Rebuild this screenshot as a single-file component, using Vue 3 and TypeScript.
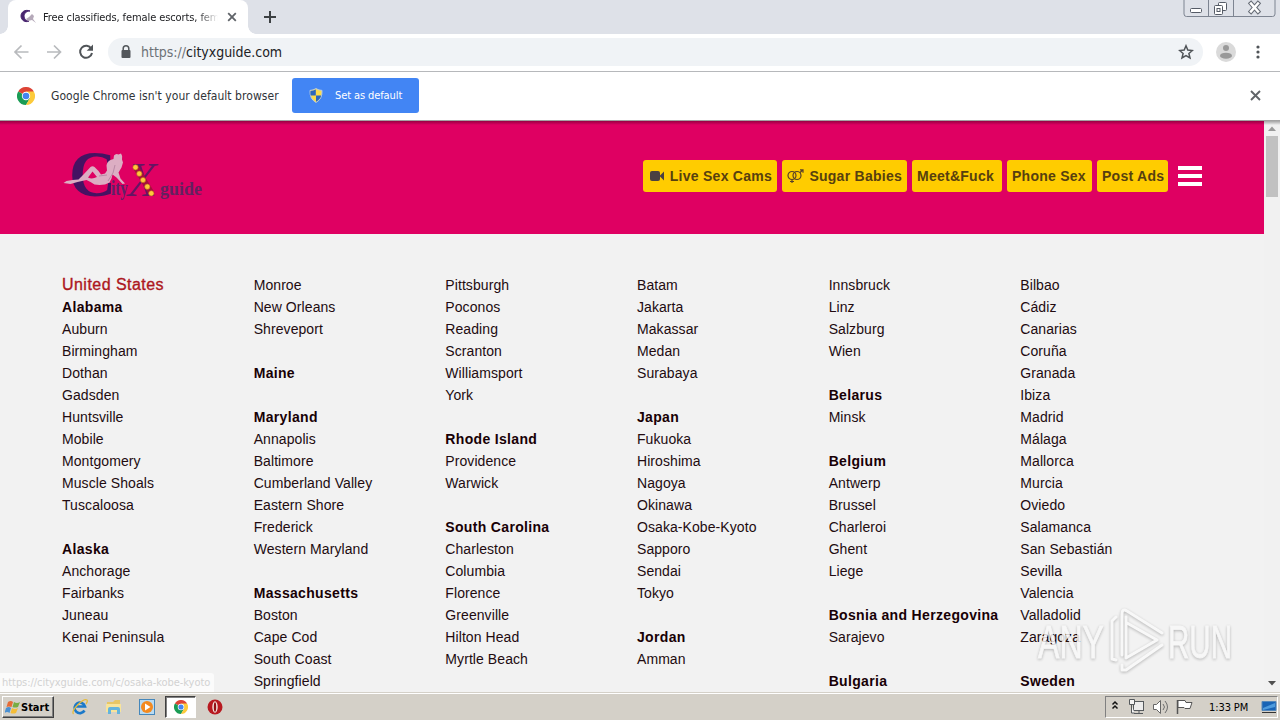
<script setup lang="ts">
const nav: { label: string; width: number; icon?: 'cam' | 'gender' }[] = [
  { label: 'Live Sex Cams', width: 134, icon: 'cam' },
  { label: 'Sugar Babies', width: 125, icon: 'gender' },
  { label: 'Meet&Fuck', width: 90 },
  { label: 'Phone Sex', width: 85 },
  { label: 'Post Ads', width: 71 },
]

// '*' marks a state or country heading, '#' a top level section, '' a blank row
const columns: string[][] = [
  ['#United States', '*Alabama', 'Auburn', 'Birmingham', 'Dothan', 'Gadsden', 'Huntsville', 'Mobile', 'Montgomery', 'Muscle Shoals', 'Tuscaloosa', '', '*Alaska', 'Anchorage', 'Fairbanks', 'Juneau', 'Kenai Peninsula'],
  ['Monroe', 'New Orleans', 'Shreveport', '', '*Maine', '', '*Maryland', 'Annapolis', 'Baltimore', 'Cumberland Valley', 'Eastern Shore', 'Frederick', 'Western Maryland', '', '*Massachusetts', 'Boston', 'Cape Cod', 'South Coast', 'Springfield'],
  ['Pittsburgh', 'Poconos', 'Reading', 'Scranton', 'Williamsport', 'York', '', '*Rhode Island', 'Providence', 'Warwick', '', '*South Carolina', 'Charleston', 'Columbia', 'Florence', 'Greenville', 'Hilton Head', 'Myrtle Beach'],
  ['Batam', 'Jakarta', 'Makassar', 'Medan', 'Surabaya', '', '*Japan', 'Fukuoka', 'Hiroshima', 'Nagoya', 'Okinawa', 'Osaka-Kobe-Kyoto', 'Sapporo', 'Sendai', 'Tokyo', '', '*Jordan', 'Amman'],
  ['Innsbruck', 'Linz', 'Salzburg', 'Wien', '', '*Belarus', 'Minsk', '', '*Belgium', 'Antwerp', 'Brussel', 'Charleroi', 'Ghent', 'Liege', '', '*Bosnia and Herzegovina', 'Sarajevo', '', '*Bulgaria'],
  ['Bilbao', 'Cádiz', 'Canarias', 'Coruña', 'Granada', 'Ibiza', 'Madrid', 'Málaga', 'Mallorca', 'Murcia', 'Oviedo', 'Salamanca', 'San Sebastián', 'Sevilla', 'Valencia', 'Valladolid', 'Zaragoza', '', '*Sweden'],
]
const kind = (s: string) => (s[0] === '#' ? 'section' : s[0] === '*' ? 'heading' : 'city')
const text = (s: string) => s.replace(/^[#*]/, '')
</script>

<template>
  <div class="screen">
    <div class="tabstrip">
      <div class="tab">
        <svg class="favicon" width="18" height="16" viewBox="0 0 18 16">
          <path d="M10 2C5 0 1 3 1 7s4 7 8 5C6 12 4 10 4 7s3-5 6-5z" fill="#48246f" stroke="#48246f" />
          <path d="M6 10l3-2 3-3 2 2-1 3 3 4-4-3-4 1z" fill="#b5a9b9" />
        </svg>
        <span class="tab-title">Free classifieds, female escorts, fem</span>
        <svg class="tab-close" width="10" height="10" viewBox="0 0 10 10"><path d="M1.200 1.200l7.600 7.600M8.800 1.200L1.200 8.800" stroke="#5f6368" stroke-width="1.800" /></svg>
      </div>
      <svg class="plus" width="12" height="12" viewBox="0 0 12 12"><path d="M6 0v12M0 6h12" stroke="#3c4043" stroke-width="2" /></svg>
      <svg class="window-buttons" width="94" height="18" viewBox="0 0 94 18" fill="none">
        <path d="M1 0v14q0 2.500 2.500 2.500h86q2.500 0 2.500-2.500V0M25.500 0v16M50.500 0v16" stroke="#7d8491" />
        <rect x="7.500" y="8.500" width="11" height="4" rx="1" fill="#fff" stroke="#555b66" />
        <rect x="35.500" y="2.500" width="8" height="8" rx="1" fill="#fff" stroke="#555b66" />
        <rect x="31.500" y="5.500" width="8" height="9" rx="1" fill="#fff" stroke="#555b66" /><rect x="34" y="8.500" width="3" height="3" stroke="#555b66" />
        <path d="M68 3.500l7 8M75 3.500l-7 8" stroke="#656b75" stroke-width="4.500" stroke-linecap="square" /><path d="M68 3.500l7 8M75 3.500l-7 8" stroke="#fff" stroke-width="2.500" stroke-linecap="square" />
      </svg>
    </div>

    <div class="toolbar">
      <svg class="tool-icons" width="96" height="24" viewBox="0 0 96 24" fill="none">
        <path d="M28.500 12h-13M21.500 5.500L15 12l6.500 6.500M47 12h13M54 5.500l6.500 6.500-6.500 6.500" stroke="#b8babd" stroke-width="1.700" />
        <path d="M91.300 8.700A6 6 0 1 0 92 13" stroke="#505458" stroke-width="2" /><path d="M93 4.500v6.300h-6.300z" fill="#505458" />
      </svg>
      <div class="omnibox">
        <svg width="10" height="14" viewBox="0 0 10 14"><rect x=".5" y="5" width="9" height="8" rx="1" fill="#53575b" /><path d="M2.200 6V3.600a2.800 2.800 0 0 1 5.600 0V6" fill="none" stroke="#53575b" stroke-width="1.500" /></svg>
        <span class="url"><i>https://</i>cityxguide.com</span>
        <svg class="star" width="16" height="16" viewBox="0 0 16 16"><path d="M8 1.800l1.800 4.300 4.600.4-3.500 3 1.100 4.500-4-2.400L4 14l1.100-4.500-3.500-3 4.600-.4z" fill="none" stroke="#505458" stroke-width="1.500" /></svg>
      </div>
      <svg class="avatar" width="20" height="20" viewBox="0 0 20 20"><circle cx="10" cy="10" r="10" fill="#dadada" /><circle cx="10" cy="6" r="3" fill="#999" /><ellipse cx="10" cy="13.700" rx="6" ry="3" fill="#999" /></svg>
      <svg width="4" height="14" viewBox="0 0 4 14" fill="#505458"><circle cx="2" cy="2" r="1.600" /><circle cx="2" cy="7" r="1.600" /><circle cx="2" cy="12" r="1.600" /></svg>
    </div>

    <div class="infobar">
      <svg class="chrome" width="18" height="18" viewBox="0 0 18 18">
        <path d="M9 9L1.200 4.500A9 9 0 0 1 16.800 4.500z" fill="#dd4436" /><path d="M9 9L1.200 4.500A9 9 0 0 0 9 18l4-6.800z" fill="#1a9c55" /><path d="M9 4.500h7.800A9 9 0 0 1 9 18l3.900-6.700z" fill="#fcca3b" />
        <circle cx="9" cy="9" r="4.200" fill="#fff" /><circle cx="9" cy="9" r="3.300" fill="#4385f1" />
      </svg>
      <span class="info-text">Google Chrome isn't your default browser</span>
      <button class="default-btn">
        <svg width="14" height="15" viewBox="0 0 14 15">
          <path d="M7 .6q3 1.800 6 1.800Q13.500 11 7 14.400.5 11 1 2.400 4 2.400 7 .6z" fill="#fbdc4b" stroke="#b9cce0" />
          <path d="M6.800 1.600v5.900H1.600Q1.200 5 1.500 3 4.500 3 6.800 1.600zM7 7.500h5.200Q11.300 11.500 7 13.700z" fill="#2c67bd" />
        </svg>
        <span>Set as default</span>
      </button>
      <svg class="info-close" width="11" height="11" viewBox="0 0 11 11"><path d="M1 1l9 9M10 1l-9 9" stroke="#606468" stroke-width="1.900" /></svg>
    </div>

    <div class="viewport">
      <div class="page">
        <header class="site-header">
          <svg class="logo" width="150" height="60" viewBox="0 0 150 60">
            <text x="7" y="50" font-size="66" font-weight="700" textLength="47" lengthAdjust="spacingAndGlyphs" fill="#451262">C</text>
            <path fill-rule="evenodd" d="M1.500 37l3-2 6-1 6-.5 5-5 7-7.500q2-1.500 4 0l4 4 2.500 3.500 4-1 2-3-.5-5q.5-4 4-5.500l3-1 .5-3.500q2-2.500 4.500-1l2.500-1q2 2.500 1 6l1 3-1.500 5-3 5 2 6 4.500 5-2.500.5-6-6.500-4-3-1 4-2 4q-4 2.500-10 2.500l-5-.5-4-2.500-4-2-9 2-7 2zM30.500 25.500l-4.500 6q4 2 9-.5z" fill="#dcaec3" />
            <path d="M53 19l-2 8-5 8M37 30l8-1" fill="none" stroke="#b98aa6" />
            <text x="49" y="49" font-size="20" font-weight="700" textLength="17" lengthAdjust="spacingAndGlyphs" fill="#602067">ity</text>
            <text x="66" y="49.500" font-size="49" font-style="italic" textLength="29" lengthAdjust="spacingAndGlyphs" fill="#641563">X</text>
            <path d="M73 20L90 48" stroke="#a60f3c" stroke-width="6" />
            <g fill="#ffc83d" stroke="#c36b19" stroke-width=".6"><circle cx="73.500" cy="21.300" r="2.600" /><circle cx="77.300" cy="27.700" r="2.600" /><circle cx="81" cy="34" r="2.600" /><circle cx="85.300" cy="40.700" r="2.600" /><circle cx="89.300" cy="47.300" r="2.600" /></g>
            <text x="98" y="48.500" font-size="19" font-weight="700" textLength="42" lengthAdjust="spacingAndGlyphs" fill="#64205f">guide</text>
          </svg>
          <nav>
            <a v-for="n in nav" :key="n.label" class="pill" :style="{ width: n.width + 'px' }">
              <svg v-if="n.icon === 'cam'" class="cam" width="15" height="12" viewBox="0 0 15 12" fill="#4b4142"><rect y="1" width="10" height="10" rx="2" /><path d="M9.500 6L14 1.500v9z" /></svg>
              <svg v-if="n.icon === 'gender'" class="gender" width="17" height="15" viewBox="0 0 17 15" fill="none" stroke="#59402a" stroke-width="1.200"><circle cx="5" cy="6.500" r="4" /><circle cx="10" cy="6.500" r="4" /><path d="M5 10.500V14M3 12.500h4M12.800 3.700L16 .8M13 .8h3v3" /></svg>
              <span>{{ n.label }}</span>
            </a>
            <svg class="burger" width="24" height="20" viewBox="0 0 24 20" fill="#fff"><path d="M0 0h24v4H0zM0 8h24v4H0zM0 16h24v4H0z" /></svg>
          </nav>
        </header>
        <main class="columns">
          <ul v-for="(col, c) in columns" :key="c">
            <li v-for="(item, i) in col" :key="i" :class="kind(item)">{{ text(item) }}</li>
          </ul>
        </main>
      </div>
      <div class="scrollbar">
        <svg width="16" height="15" viewBox="0 0 16 15"><path d="M4 10h8L8 5.500z" fill="#999" /></svg>
        <div class="thumb"></div>
        <svg class="down" width="16" height="16" viewBox="0 0 16 16"><path d="M4 5h8l-4 4.500z" fill="#505050" /></svg>
      </div>
      <div class="status">https://cityxguide.com/c/osaka-kobe-kyoto</div>
    </div>

    <svg class="watermark" width="210" height="76" viewBox="0 0 210 76">
      <g fill="#f8f8f8" stroke="#f8f8f8" stroke-width=".8" font-size="47">
        <text x="5" y="56" textLength="66" lengthAdjust="spacingAndGlyphs">ANY</text>
        <text x="135" y="56" textLength="64" lengthAdjust="spacingAndGlyphs">RUN</text>
      </g>
      <g fill="none" stroke="#fafafa" stroke-width="3" stroke-linejoin="round" stroke-linecap="round">
        <path d="M83 15l-4 4v38l4 1" />
        <path d="M89 53V12q0-6 5-3l35 22M94 21l30 17-31 18V15" />
        <path d="M89 63v5l4 0 36-25" />
      </g>
    </svg>

    <footer class="taskbar">
      <div class="start">
        <svg width="16" height="15" viewBox="0 0 16 15"><path d="M3 2q3-2 5 0L6.500 7q-3-1-5 0z" fill="#e66c37" /><path d="M9 2q3 2 6 0l-2 5q-3 1-5.500 0z" fill="#78ad43" /><path d="M1 8q3-2 5 0l-1.500 5Q2 11-.5 13z" fill="#4a90d2" /><path d="M7 8q3 2 6 0l-2 5q-3 1-5.500 0z" fill="#f5bd36" /></svg>
        <span>Start</span>
      </div>
      <svg class="ie" width="18" height="18" viewBox="0 0 18 18" fill="none"><path d="M13.500 12.500A5.300 5.300 0 1 1 14 8.500H5" stroke="#1b79c9" stroke-width="2.600" /><path d="M2.500 16C-1 12.500 13-.5 16 2q1 1.500-1 4" stroke="#e6bb3b" stroke-width="1.300" /></svg>
      <svg class="folder" width="18" height="18" viewBox="0 0 18 18"><path d="M2 4h6l2-2h5v12H2z" fill="#e7c665" /><path d="M1 6h15v8H1z" fill="#f8e49a" /><path d="M3 16v-5q0-2 2-2h8q2 0 2 2v5h-3v-4H6v4z" fill="#64b4dc" /></svg>
      <svg class="media" width="17" height="17" viewBox="0 0 17 17"><rect x=".5" y=".5" width="15" height="15" fill="#b9dbf2" stroke="#4587bb" /><circle cx="8" cy="8" r="6" fill="#f38a20" /><path d="M6 4.500v7l5.500-3.500z" fill="#fff" /></svg>
      <div class="task-active">
        <svg width="14" height="14" viewBox="0 0 18 18"><path d="M9 9L1.200 4.500A9 9 0 0 1 16.800 4.500z" fill="#dd4436" /><path d="M9 9L1.200 4.500A9 9 0 0 0 9 18l4-6.800z" fill="#1a9c55" /><path d="M9 4.500h7.800A9 9 0 0 1 9 18l3.900-6.700z" fill="#fcca3b" /><circle cx="9" cy="9" r="4.200" fill="#fff" /><circle cx="9" cy="9" r="3.300" fill="#4385f1" /></svg>
      </div>
      <svg class="opera" width="16" height="16" viewBox="0 0 16 16"><circle cx="8" cy="8" r="7.500" fill="#b81920" /><ellipse cx="8" cy="8" rx="2.700" ry="5.700" fill="#f4e5df" /><ellipse cx="8" cy="8" rx="1.200" ry="4.700" fill="#931014" /></svg>
      <div class="tray">
        <svg class="tray-icons" width="90" height="20" viewBox="0 0 90 20" fill="none">
          <path d="M6.500 7.500L9 5l2.500 2.500M6.500 11.500L9 9l2.500 2.500" stroke="#111" stroke-width="1.500" />
          <rect x="27.500" y="4.500" width="10" height="9" fill="#ececec" stroke="#55595c" /><path d="M28 16.500h9M33 14v2" stroke="#55595c" /><path d="M23.500 2.500h5v5h-5zM25.500 8v8h3" fill="#f4f4f4" stroke="#55595c" />
          <path d="M47.500 7.500h3l4-4v13l-4-4h-3z" fill="#fff" stroke="#666" /><path d="M57 7q3 3 0 6M59 4q5 6 0 12" stroke="#6d6d6d" />
          <path d="M71.500 3v14" stroke="#555" stroke-width="1.500" /><path d="M72 3.500h7l1 2h6l-2 6h-5l-1-1h-6z" fill="#fff" stroke="#555" />
        </svg>
        <span class="clock">1:33 PM</span>
        <svg class="desktop" width="16" height="14" viewBox="0 0 16 14"><path d="M1 1.500h14v9H1z" fill="#1863b5" stroke="#5688ba" /><path d="M2 8l12-5v4L2 10z" fill="#4e9bdd" /><path d="M1 12.500h14" stroke="#333" /></svg>
      </div>
    </footer>
  </div>
</template>

<style>
body { overflow: hidden; }
</style>

<style scoped>
* { box-sizing: border-box; }
svg { display: block; flex: none; }
span { white-space: nowrap; }
.screen { position: relative; width: 1280px; height: 720px; overflow: hidden; background: #f2f2f2; font-family: "DejaVu Sans Condensed", "DejaVu Sans", sans-serif; color: #202124; }
.tabstrip { height: 34px; background: #dee1e8; display: flex; }
.tab { position: relative; width: 240px; height: 34px; margin-left: 8px; padding-left: 12px; background: #fff; border-radius: 8px 8px 0 0; display: flex; align-items: center; }
.tab::before, .tab::after { content: ''; position: absolute; bottom: 0; width: 8px; height: 8px; }
.tab::before { left: -8px; background: radial-gradient(circle at 0 0, transparent 7.500px, #fff 8px); }
.tab::after { right: -8px; background: radial-gradient(circle at 100% 0, transparent 7.500px, #fff 8px); }
.tab-title { width: 175px; margin-left: 5px; overflow: hidden; font-size: 11px; letter-spacing: -.1px; mask-image: linear-gradient(90deg, #000 155px, transparent); }
.tab-close { margin-left: 9px; }
.plus { margin: 11px 0 0 16px; }
.window-buttons { margin-left: auto; margin-right: 3px; }
.toolbar { height: 38px; background: #fff; border-bottom: 1px solid #b6b8bb; display: flex; align-items: center; padding: 0 20px 2px 0; }
.tool-icons { margin-right: 12px; }
.omnibox { width: 1095px; height: 28px; border-radius: 14px; background: #f0f3f6; display: flex; align-items: center; padding: 0 9px 0 13px; }
.url { font-size: 14px; margin-left: 10px; letter-spacing: -.02px; }
.url i { font-style: normal; color: #6d7276; }
.star { margin-left: auto; }
.avatar { margin: 0 auto 0 13px; }
.infobar { height: 49px; background: #fff; display: flex; align-items: center; padding: 0 19px 2px 0; }
.chrome { margin-left: 17px; }
.info-text { width: 228px; margin-left: 16px; font-size: 12px; letter-spacing: .05px; color: #303438; }
.default-btn { width: 127px; height: 35px; margin-left: 13px; padding: 0 0 0 17px; border: 0; border-radius: 3px; background: #4285f4; color: #fff; display: flex; align-items: center; gap: 12px; font: 11px "DejaVu Sans Condensed", "DejaVu Sans", sans-serif; letter-spacing: -.1px; }
.info-close { margin-left: auto; }
.viewport { position: relative; height: 571px; display: flex; }
.viewport::before { content: ''; position: absolute; z-index: 2; top: -1px; left: 0; right: 0; height: 5px; background: linear-gradient(rgba(0,0,0,.4), transparent); }
.page { width: 1264px; overflow: hidden; font-family: "Liberation Sans", Arial, sans-serif; }
.site-header { height: 113px; background: #df0062; display: flex; align-items: center; padding: 0 62px 3px; }
.logo { font-family: "Liberation Serif", serif; }
nav { margin-left: auto; display: flex; align-items: center; gap: 5px; }
.pill { height: 32px; padding: 0 5px; border-radius: 3px; background: #fc0; color: #57400f; display: flex; align-items: center; justify-content: space-between; font: bold 14px "Liberation Sans", Arial, sans-serif; letter-spacing: .26px; }
.cam { margin-left: 2px; }
.burger { margin-left: 5px; }
.columns { display: grid; grid-template-columns: repeat(6, 191.670px); padding: 40px 0 0 62px; width: 1264px; }
ul { margin: 0; padding: 0; list-style: none; }
li { height: 22px; line-height: 22px; font-size: 14px; white-space: nowrap; color: #220b10; letter-spacing: .08px; }
.heading { font-weight: 700; color: #180005; letter-spacing: .33px; }
.section { font-size: 16px; line-height: 21px; color: #ad1721; letter-spacing: .46px; -webkit-text-stroke: .35px #ad1721; }
.scrollbar { width: 16px; background: #f1f1f1; display: flex; flex-direction: column; }
.thumb { width: 12px; height: 61px; margin-left: 2px; background: #c1c1c1; }
.down { margin-top: auto; }
.status { position: absolute; left: 0; bottom: 0; width: 214px; height: 19px; padding-left: 2px; background: #fbfbfb; color: #d2d2d2; font-size: 11px; line-height: 20px; letter-spacing: -.05px; white-space: nowrap; border-radius: 0 3px 0 0; }
.watermark { position: absolute; left: 1033px; top: 602px; overflow: visible; filter: drop-shadow(0 1px 1.500px rgba(0,0,0,.3)); opacity: .85; font-family: "Liberation Sans", Arial, sans-serif; }
.taskbar { height: 28px; background: #d4d0c8; border-top: 1px solid #d4d0c8; box-shadow: inset 0 1px #fff; display: flex; align-items: center; padding: 1px 2px 0; }
.start { width: 52px; height: 22px; padding-left: 2px; border: 1px solid; border-color: #fff #404040 #404040 #fff; box-shadow: inset -1px -1px #808080; display: flex; align-items: center; font-size: 11px; font-weight: 700; color: #000; }
.ie { margin-left: 17px; }
.folder { margin-left: 16px; }
.media { margin-left: 16px; }
.task-active { width: 31px; height: 22px; margin-left: 9px; background: #fff; border: 1px solid; border-color: #404040 #fff #fff #404040; box-shadow: inset 1px 1px #808080; display: flex; align-items: center; justify-content: center; }
.opera { margin-left: 11px; }
.tray { width: 173px; height: 22px; margin-left: auto; border: 1px solid; border-color: #808080 #fff #fff #808080; display: flex; align-items: center; color: #000; }
.clock { width: 39px; margin-left: 13px; font-size: 11px; letter-spacing: -.1px; }
.desktop { margin-left: auto; }
</style>
